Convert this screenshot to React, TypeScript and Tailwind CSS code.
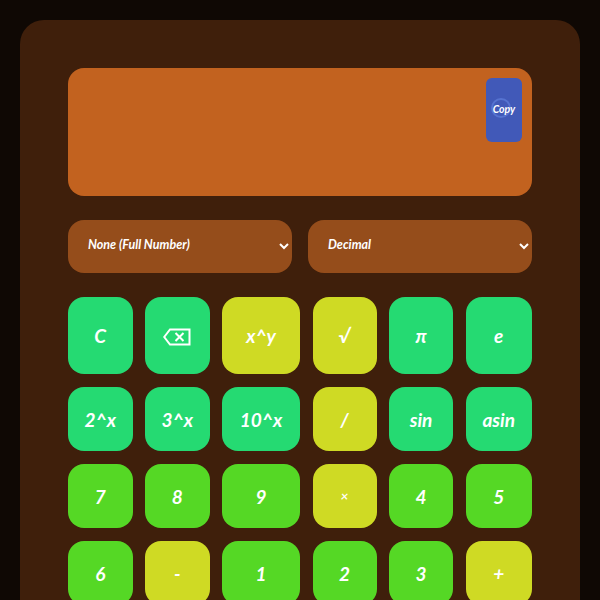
const buttons = [
  { label: 'C', tone: 'fn' },
  { label: 'backspace', tone: 'fn' },
  { label: 'x^y', tone: 'op' },
  { label: '√', tone: 'op' },
  { label: 'π', tone: 'fn' },
  { label: 'e', tone: 'fn' },
  { label: '2^x', tone: 'fn' },
  { label: '3^x', tone: 'fn' },
  { label: '10^x', tone: 'fn' },
  { label: '/', tone: 'op' },
  { label: 'sin', tone: 'fn' },
  { label: 'asin', tone: 'fn' },
  { label: '7', tone: 'num' },
  { label: '8', tone: 'num' },
  { label: '9', tone: 'num' },
  { label: '×', tone: 'op', small: true },
  { label: '4', tone: 'num' },
  { label: '5', tone: 'num' },
  { label: '6', tone: 'num' },
  { label: '-', tone: 'op' },
  { label: '1', tone: 'num' },
  { label: '2', tone: 'num' },
  { label: '3', tone: 'num' },
  { label: '+', tone: 'op' },
];

const tones: Record<string, string> = {
  fn: 'bg-[#25da72]',
  op: 'bg-[#cfda24]',
  num: 'bg-[#55d825]',
};

function BackspaceIcon() {
  return (
    <svg width="28" height="18" viewBox="0 0 28 18" fill="none" stroke="white" strokeWidth="2">
      <path d="M7 1.5H26.5V16.5H7L1.2 9Z" />
      <path d="M12.5 5L20.5 13M20.5 5L12.5 13" />
    </svg>
  );
}

export default function App() {
  return (
    <div className="h-[600px] overflow-hidden bg-[#0f0804] p-5 font-['Lato',sans-serif] text-white">
      <div className="rounded-[24px] bg-[#3f1f0b] p-12 pb-24">
        <div className="flex h-32 items-start justify-end rounded-2xl bg-[#c2621f] p-2.5">
          <button className="relative flex h-16 w-9 items-center justify-center rounded-md bg-[#4159b8] text-[10.5px] font-bold italic">
            <span className="absolute left-[5px] top-[20px] h-[20px] w-[20px] rounded-full border-2 border-[#5673d0]" />
            <span className="relative">Copy</span>
          </button>
        </div>

        <div className="mt-6 grid grid-cols-2 gap-4">
          <select className="h-[53px] rounded-2xl bg-[#954d1b] pb-1 pl-4 text-[12.5px] font-bold italic text-white outline-none">
            <option>None (Full Number)</option>
          </select>
          <select className="h-[53px] rounded-2xl bg-[#954d1b] pb-1 pl-4 text-[12.5px] font-bold italic text-white outline-none">
            <option>Decimal</option>
          </select>
        </div>

        <div className="mt-6 grid grid-cols-[64.5px_64.5px_78px_64px_64px_66.5px] grid-rows-[77px_64px_64px_64px] gap-x-[12.5px] gap-y-[13px]">
          {buttons.map((b) => (
            <button
              key={b.label}
              className={`flex items-center justify-center rounded-2xl pt-0.5 font-bold italic ${tones[b.tone]} ${b.small ? 'text-[13px]' : 'text-[19px]'}`}
            >
              {b.label === 'backspace' ? <BackspaceIcon /> : b.label}
            </button>
          ))}
        </div>
      </div>
    </div>
  );
}
